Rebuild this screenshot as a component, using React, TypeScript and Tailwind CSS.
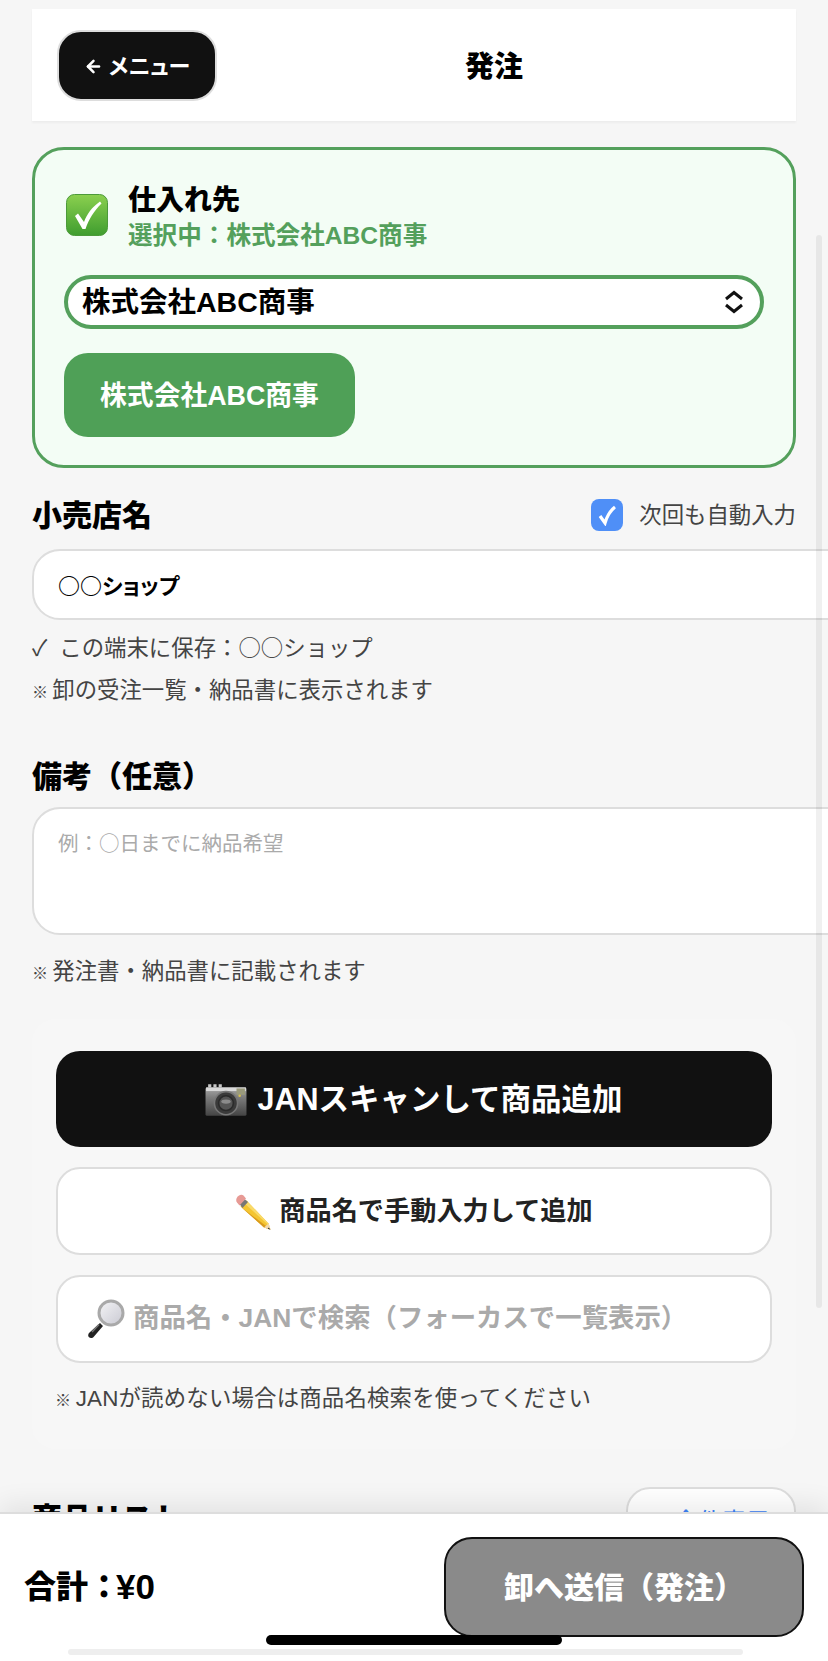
import { ArrowLeft } from 'lucide-react';

const fontStack = `font-['Liberation_Sans','Noto_Sans_CJK_JP',sans-serif]`;
const cjkFirst = `font-['Noto_Sans_CJK_JP',sans-serif]`;

const CheckEmoji = () => (
  <svg width="42" height="42" viewBox="0 0 42 42" className="shrink-0 mt-[4px]">
    <defs>
      <linearGradient id="chk" x1="0" y1="0" x2="0" y2="1">
        <stop offset="0" stopColor="#8bd04f" />
        <stop offset="1" stopColor="#3f9d2f" />
      </linearGradient>
    </defs>
    <rect x="0.5" y="0.5" width="41" height="41" rx="8" fill="url(#chk)" stroke="#4c9a3a" />
    <path d="M9 22 L12 19.5 L18 28 C21 20 26 13 34 7.5 L35.5 9.5 C28 17 23 25 19.5 35 L16.5 35 Z" fill="#fff" />
  </svg>
);

const CameraEmoji = () => (
  <svg width="42" height="34" viewBox="0 0 40 32" className="shrink-0">
    <defs>
      <linearGradient id="cam" x1="0" y1="0" x2="0" y2="1">
        <stop offset="0" stopColor="#a8a8a8" />
        <stop offset="0.35" stopColor="#7d7d7d" />
        <stop offset="1" stopColor="#444" />
      </linearGradient>
    </defs>
    <rect x="3" y="1" width="3" height="3" fill="#c8c8c8" />
    <rect x="8" y="1" width="3" height="3" fill="#c8c8c8" />
    <rect x="13" y="1" width="3" height="3" fill="#c8c8c8" />
    <rect x="0.5" y="4" width="39" height="27" rx="1.5" fill="url(#cam)" />
    <rect x="1" y="4" width="38" height="3.5" fill="#d9d9d9" />
    <rect x="30" y="5" width="8" height="6" fill="#9a9a7c" />
    <circle cx="20" cy="19" r="11" fill="#3a3a3a" stroke="#777" strokeWidth="1.5" />
    <circle cx="20" cy="19" r="7" fill="#555" stroke="#2a2a2a" strokeWidth="1.5" />
    <ellipse cx="20" cy="17.5" rx="4.5" ry="2" fill="#8b8b8b" />
    <circle cx="33" cy="12" r="1.2" fill="#d8c24a" />
  </svg>
);

const PencilEmoji = () => (
  <svg width="36" height="36" viewBox="0 0 36 36" className="shrink-0">
    <path d="M11.5 6.5 L33.5 29.5 L35.5 35.5 L29 33.5 L5.5 12.5 Z" fill="#f4c531" />
    <path d="M11.5 6.5 L33.5 29.5 L34.5 32 L9 9 Z" fill="#f9da6a" />
    <path d="M5.5 12.5 L29 33.5 L35.5 35.5 Z" fill="#d99a1e" />
    <path d="M29 33.5 L33.5 29.5 L35.5 35.5 Z" fill="#f0d9b0" />
    <path d="M33.5 33.5 L35.5 35.5 L33 35 Z" fill="#222" />
    <path d="M4.5 10 L9.5 5 L13 8 L7.5 14 Z" fill="#777" />
    <path d="M1.5 4.5 C3 1 6.5 0 8.5 1.5 L11 4.5 L4.5 11.5 L2 8.5 C1.2 7.5 1 6 1.5 4.5 Z" fill="#e79a95" />
  </svg>
);

const SearchEmoji = () => (
  <svg width="37" height="40" viewBox="0 0 37 40" className="shrink-0">
    <defs>
      <linearGradient id="lens" x1="0" y1="0" x2="1" y2="1">
        <stop offset="0" stopColor="#f4f4f6" />
        <stop offset="1" stopColor="#c9c9d2" />
      </linearGradient>
    </defs>
    <path d="M12 24 L15 27 L6 37.5 C4.5 39.5 2 39.5 0.8 38 C-0.2 36.5 0 35 1.5 33.5 Z" fill="#222" />
    <path d="M11 25.5 L4 33" stroke="#777" strokeWidth="1.5" />
    <circle cx="23" cy="14" r="12" fill="url(#lens)" stroke="#a9a9a9" strokeWidth="3" />
  </svg>
);

// ※ は参照画像だと小さめ
const Note = ({ children, className = '' }: { children: React.ReactNode; className?: string }) => (
  <p className={`text-[22.4px] leading-[32px] text-[#444] ${className}`}>
    <span className="-mr-[2px] text-[16px]">※</span> {children}
  </p>
);

export default function App() {
  return (
    <div className={`relative w-[828px] h-[1661px] overflow-hidden bg-[#f6f6f6] text-black ${fontStack}`}>
      <div className="pt-[9px] px-[32px]">
        {/* ヘッダー */}
        <header className="flex items-center h-[112px] px-[25px] bg-white shadow-[0_2px_2px_rgba(0,0,0,0.04)]">
          <button className="flex items-center justify-center gap-[6px] w-[160px] h-[71px] pt-[2px] rounded-[24px] border-2 border-[#ddd] bg-[#111] text-white text-[22px] font-bold [font-feature-settings:'palt']">
            <ArrowLeft size={19} strokeWidth={3.2} />
            メニュー
          </button>
          <h1 className="flex-1 pt-[6px] text-center text-[29px] font-black">発注</h1>
        </header>

        {/* 仕入れ先 */}
        <section className="mt-[26px] h-[321px] pt-[40px] px-[29px] rounded-[32px] border-[3px] border-[#54a05c] bg-[#f3fdf5]">
          <div className="flex items-start gap-[20px] h-[64px] pl-[2px]">
            <CheckEmoji />
            <div className="mt-[-7px]">
              <div className="text-[28px] leading-[36px] font-black">仕入れ先</div>
              <div className="text-[24.6px] leading-[33px] font-bold text-[#54a05c]">選択中：株式会社ABC商事</div>
            </div>
          </div>
          <div className="flex items-center justify-between h-[54px] mt-[21px] pl-[14px] pr-[16px] rounded-[27px] border-4 border-[#54a05c] bg-white text-[28.5px] font-bold">
            <span className="pt-[1px]">株式会社ABC商事</span>
            <svg width="20" height="24" viewBox="0 0 20 24" fill="none" stroke="#111" strokeWidth="3">
              <path d="M2 9 L10 2.5 L18 9" />
              <path d="M2 15 L10 21.5 L18 15" />
            </svg>
          </div>
          <button className="block w-[291px] h-[84px] mt-[24px] pt-[2px] rounded-[24px] bg-[#4fa057] text-white text-[26.8px] font-bold">
            株式会社ABC商事
          </button>
        </section>

        {/* 小売店名 */}
        <div className="flex items-center justify-between h-[40px] mt-[27px]">
          <h2 className="text-[30px] font-black">小売店名</h2>
          <label className="flex items-center gap-[16px] text-[22.4px] text-[#444]">
            <span className="flex items-center justify-center w-[32px] h-[32px] rounded-[8px] bg-[#4f8ff7]">
              <svg width="22" height="22" viewBox="0 0 22 22" fill="none" stroke="#fff" strokeWidth="3.2">
                <path d="M4 12 L9 19 C11 12 14 7 19 3" />
              </svg>
            </span>
            <span className="pt-[2px]">次回も自動入力</span>
          </label>
        </div>
        <div className={`flex items-center w-[calc(100%+80px)] h-[71px] mt-[14px] pl-[24px] pb-[1px] rounded-[28px] border-2 border-[#ddd] bg-white text-[22px] font-bold [font-feature-settings:'palt'] ${cjkFirst}`}>
          ○○ショップ
        </div>
        <p className={`flex gap-[12px] mt-[10px] text-[22.4px] leading-[32px] text-[#444] ${cjkFirst}`}>
          <span>✓</span>
          <span>この端末に保存：○○ショップ</span>
        </p>
        <Note className="mt-[13px]">卸の受注一覧・納品書に表示されます</Note>

        {/* 備考 */}
        <h2 className="mt-[48px] text-[30px] leading-[40px] font-black">備考（任意）</h2>
        <div className={`w-[calc(100%+80px)] h-[128px] mt-[10px] pt-[18px] pl-[24px] rounded-[28px] border-2 border-[#ddd] bg-white text-[20.5px] leading-[30px] text-[#aaa] ${cjkFirst}`}>
          例：○日までに納品希望
        </div>
        <Note className="mt-[21px]">発注書・納品書に記載されます</Note>

        {/* 商品追加 */}
        <section className="flex flex-col mt-[29px] px-[24px] pt-[32px] h-[430px] rounded-[24px] bg-[#f7f7f7]">
          <button className="flex items-center justify-center gap-[10px] h-[96px] pt-[2px] rounded-[24px] bg-[#111] text-white text-[30.5px] font-bold">
            <CameraEmoji />
            JANスキャンして商品追加
          </button>
          <button className="flex items-center justify-center gap-[8px] h-[88px] mt-[20px] pt-[2px] rounded-[24px] border-2 border-[#ddd] bg-white text-[#222] text-[26.2px] font-bold">
            <PencilEmoji />
            商品名で手動入力して追加
          </button>
          <div className="flex items-center gap-[8px] h-[88px] mt-[20px] pl-[30px] rounded-[24px] border-2 border-[#ddd] bg-white text-[#aaa] text-[26.4px] font-bold">
            <SearchEmoji />
            商品名・JANで検索（フォーカスで一覧表示）
          </div>
          <Note className="mt-[20px] tracking-[0.2px] -ml-[1px]">JANが読めない場合は商品名検索を使ってください</Note>
        </section>

        {/* 商品リスト */}
        <div className="flex justify-between mt-[38px]">
          <h2 className="mt-[12px] text-[30px] leading-[40px] font-black">商品リスト</h2>
          <button className="w-[170px] h-[70px] pl-[22px] rounded-[24px] border-2 border-[#ddd] bg-white text-[24px] text-[#3b82f6]">
            全件表示
          </button>
        </div>
      </div>

      {/* 縦スクロールバー */}
      <div className="absolute left-[816px] top-[235px] w-[6px] h-[1073px] rounded-full bg-black/[0.06]" />

      {/* 下部固定バー */}
      <div className="absolute left-0 right-0 bottom-0 flex items-start justify-between h-[149px] pt-[23px] pl-[24px] pr-[24px] border-t-2 border-[#ddd] bg-white shadow-[0_-8px_24px_rgba(0,0,0,0.08)]">
        <div className="flex items-center h-[100px] text-[32px] font-black">
          合計：<span className="-ml-[4px] text-[35px]">¥0</span>
        </div>
        <button className="w-[360px] h-[100px] rounded-[28px] border-2 border-[#111] bg-[#8a8a8a] text-white text-[30px] font-black">
          卸へ送信（発注）
        </button>
      </div>

      {/* ホームインジケーター */}
      <div className="absolute left-[266px] top-[1635px] w-[296px] h-[10px] rounded-full bg-black" />
      <div className="absolute left-[68px] top-[1649px] w-[675px] h-[6px] rounded-full bg-[#eee]" />
    </div>
  );
}
